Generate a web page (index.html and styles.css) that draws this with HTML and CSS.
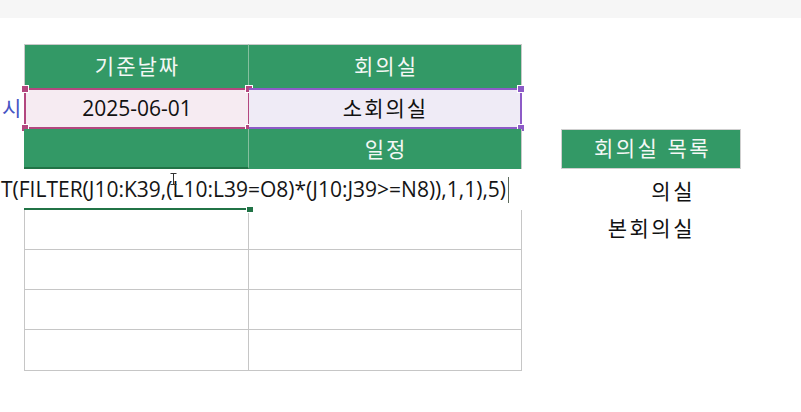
FILE: index.html
```html
<!DOCTYPE html>
<html lang="ko">
<head>
<meta charset="utf-8">
<link rel="stylesheet" href="styles.css">
</head>
<body>
<div class="topbar"></div>
<div class="sheet">
  <div class="c hdr r1 c1">기준날짜</div>
  <div class="c hdr r1 c2">회의실</div>

  <div class="gut r2">시</div>
  <div class="c sel-pink r2 c1">2025-06-01
    <span class="h tl"></span><span class="h tr"></span><span class="h bl"></span><span class="h br"></span>
  </div>
  <div class="c sel-purple r2 c2">소회의실
    <span class="h tr"></span><span class="h br"></span>
  </div>

  <div class="c hdr r3 c1 dark-bottom"></div>
  <div class="c hdr r3 c2">일정</div>
  <div class="listhead r3">회의실 목록</div>

  <div class="formula r4"><span class="ftext">T(FILTER(J10:K39,(L10:L39=O8)*(J10:J39&gt;=N8)),1,1),5)</span><span class="caret"></span>
    <svg class="ibeam" width="7" height="12" viewBox="0 0 7 12"><path d="M0.5 0.5h6M3.5 0.5v11M0.5 11.5h6" stroke="#333" stroke-width="1" fill="none"/></svg>
  </div>
  <div class="active r4"><span class="h br green"></span></div>
  <div class="item r4">의실</div>

  <div class="c e r5 c1 first"></div><div class="c e r5 c2"></div>
  <div class="item r5">본회의실</div>
  <div class="c e r6 c1 first"></div><div class="c e r6 c2"></div>
  <div class="c e r7 c1 first"></div><div class="c e r7 c2"></div>
  <div class="c e r8 c1 first"></div><div class="c e r8 c2"></div>
</div>
</body>
</html>
```

FILE: styles.css
```css
html, body {
  margin: 0;
  padding: 0;
  background: #ffffff;
}
body {
  width: 801px;
  height: 412px;
  overflow: hidden;
  font-family: "Open Sans", "Noto Sans CJK KR", sans-serif;
  font-size: 21px;
  color: #111;
}
.topbar {
  height: 18px;
  background: #f6f6f6;
}
.sheet {
  display: grid;
  grid-template-columns: 24px 225px 273px 39px 180px 1fr;
  grid-template-rows: 26px 44px 41px 40px 41px 40px 40px 40px 41px;
}
.r1 { grid-row: 2; }
.r2 { grid-row: 3; }
.r3 { grid-row: 4; }
.r4 { grid-row: 5; }
.r5 { grid-row: 6; }
.r6 { grid-row: 7; }
.r7 { grid-row: 8; }
.r8 { grid-row: 9; }
.c1 { grid-column: 2; }
.c2 { grid-column: 3; }

.c {
  position: relative;
  box-sizing: border-box;
  display: flex;
  align-items: center;
  justify-content: center;
  line-height: 1;
}
.hdr {
  background: #339966;
  color: #f4f7f5;
  letter-spacing: 2px;
  padding-left: 2px;
}
.hdr.c1 { border-right: 1px solid #86bf9f; }
.hdr.r1 { border-top: 1px solid #c9c9c9; }
.hdr.r1.c1 { border-left: 1px solid #c9c9c9; }
.hdr.r1.c2 { border-right: 1px solid #c9c9c9; }
.hdr.r3.c2 { border-right: 1px solid #c9c9c9; }
.dark-bottom { border-bottom: 2px solid #217346; }

.gut {
  grid-column: 1;
  display: flex;
  align-items: center;
  padding-left: 2px;
  color: #4755c4;
  line-height: 1;
}
.sel-pink {
  background: #f6ebf2;
  border: 2px solid #b3477f;
  border-right-width: 1px;
}
.sel-purple {
  background: #efebf6;
  border: 2px solid #8d5bc7;
  border-left: none;
  letter-spacing: 2px;
  padding-left: 2px;
}
.h {
  position: absolute;
  width: 6px;
  height: 6px;
  background: #b3477f;
  outline: 1px solid #ffffff;
}
.sel-purple .h { background: #8d5bc7; }
.h.tl { left: -4px; top: -4px; }
.h.tr { right: -4px; top: -4px; }
.h.bl { left: -4px; bottom: -4px; }
.h.br { right: -4px; bottom: -4px; }

.formula {
  grid-column: 1 / 4;
  position: relative;
  display: flex;
  align-items: center;
  padding-left: 1px;
  line-height: 1;
  white-space: nowrap;
  z-index: 2;
}
.ftext {
  color: #151515;
}
.caret {
  display: inline-block;
  width: 1px;
  height: 26px;
  margin-left: 2px;
  background: #5d6b5d;
}
.ibeam {
  position: absolute;
  left: 170px;
  top: 4px;
}
.active {
  grid-column: 2;
  position: relative;
  border-bottom: 2px solid #217346;
  box-sizing: border-box;
  z-index: 1;
}
.h.green {
  background: #217346;
  right: -4px;
  bottom: -4px;
  width: 6px;
  height: 5px;
}

.e {
  border-right: 1px solid #c6c6c6;
  border-bottom: 1px solid #c6c6c6;
}
.e.first { border-left: 1px solid #c6c6c6; }

.listhead {
  grid-column: 5;
  box-sizing: border-box;
  background: #339966;
  color: #f4f7f5;
  border: 1px solid #cfcfcf;
  display: flex;
  align-items: center;
  justify-content: center;
  line-height: 1;
  padding-bottom: 1px;
  padding-left: 3px;
  letter-spacing: 2.5px;
}
.item {
  grid-column: 5;
  display: flex;
  align-items: center;
  justify-content: flex-end;
  padding-right: 46px;
  padding-top: 4px;
  line-height: 1;
  letter-spacing: 2.5px;
}
.r5.item { align-items: flex-start; padding-top: 8px; }
```
